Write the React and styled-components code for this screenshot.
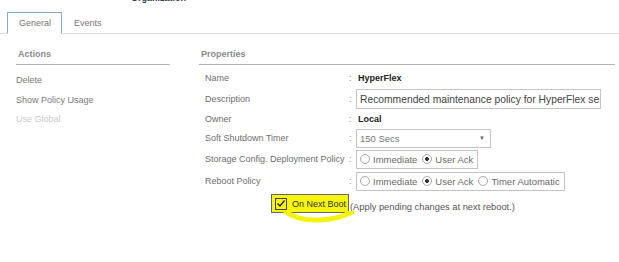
import React from "react";
import styled, { createGlobalStyle } from "styled-components";

const GlobalStyle = createGlobalStyle`
  body {
    margin: 0;
    background: #ffffff;
    font-family: "Liberation Sans", Arial, sans-serif;
  }
`;

const rows = [
  { label: "Name", kind: "bold", value: "HyperFlex", h: 20 },
  {
    label: "Description",
    kind: "input",
    value: "Recommended maintenance policy for HyperFlex servers",
    h: 21,
  },
  { label: "Owner", kind: "bold", value: "Local", h: 19 },
  { label: "Soft Shutdown Timer", kind: "select", value: "150 Secs", h: 20 },
  {
    label: "Storage Config. Deployment Policy",
    kind: "radio",
    options: ["Immediate", "User Ack"],
    selected: "User Ack",
    h: 22,
  },
  {
    label: "Reboot Policy",
    kind: "radio",
    options: ["Immediate", "User Ack", "Timer Automatic"],
    selected: "User Ack",
    h: 22,
  },
];

const App = () => {
  return (
    <Page>
      <GlobalStyle />
      <TopStrip>
        <OrgText>Organization</OrgText>
      </TopStrip>
      <TabBar>
        <Tab active>General</Tab>
        <Tab>Events</Tab>
      </TabBar>
      <Body>
        <ActionsPanel>
          <PanelHeader>Actions</PanelHeader>
          <ActionList>
            <ActionLink>Delete</ActionLink>
            <ActionLink>Show Policy Usage</ActionLink>
            <ActionLink disabled>Use Global</ActionLink>
          </ActionList>
        </ActionsPanel>
        <PropsPanel>
          <PanelHeader>Properties</PanelHeader>
          <PropRows>
            {rows.map((r) => (
              <PropRow key={r.label} h={r.h}>
                <Label>{r.label}</Label>
                <Colon>:</Colon>
                {r.kind === "bold" && <BoldValue>{r.value}</BoldValue>}
                {r.kind === "input" && <TextInput>{r.value}</TextInput>}
                {r.kind === "select" && (
                  <Select>
                    <span>{r.value}</span>
                    <Arrow>▼</Arrow>
                  </Select>
                )}
                {r.kind === "radio" && (
                  <RadioGroup>
                    {r.options.map((o) => (
                      <RadioItem key={o}>
                        <RadioDot checked={o === r.selected} />
                        {o}
                      </RadioItem>
                    ))}
                  </RadioGroup>
                )}
              </PropRow>
            ))}
          </PropRows>
          <BootRow>
            <BootBox>
              <CheckBox>
                <svg width="10" height="9" viewBox="0 0 10 9">
                  <path
                    d="M1.5 4.5 L4 7 L8.5 1.5"
                    fill="none"
                    stroke="#222"
                    strokeWidth="1.4"
                  />
                </svg>
              </CheckBox>
              On Next Boot
              <Tail width="82" height="14" viewBox="0 0 82 14">
                <path
                  d="M13 1 Q 26 10 46 9 Q 66 8 79 1"
                  fill="none"
                  stroke="#f4f40a"
                  strokeWidth="5"
                  strokeLinecap="round"
                />
              </Tail>
            </BootBox>
            <BootNote>(Apply pending changes at next reboot.)</BootNote>
          </BootRow>
        </PropsPanel>
      </Body>
    </Page>
  );
};

const Page = styled.div`
  width: 619px;
  height: 262px;
  overflow: hidden;
  background: #fff;
`;

const TopStrip = styled.div`
  height: 4px;
  overflow: hidden;
  padding-left: 131px;
`;

const OrgText = styled.div`
  margin-top: -7px;
  font-size: 9px;
  line-height: 11px;
  font-weight: bold;
  color: #2c3e50;
`;

const TabBar = styled.div`
  display: flex;
  align-items: flex-end;
  margin-top: 8px;
  padding-left: 7px;
  height: 21px;
  border-bottom: 1px solid #dcdcdc;
`;

const Tab = styled.div`
  box-sizing: border-box;
  height: ${(p) => (p.active ? "22px" : "21px")};
  margin-bottom: ${(p) => (p.active ? "-1px" : "0")};
  padding: 5px 10px 0 11px;
  font-size: 9px;
  color: #777;
  background: #fff;
  border: ${(p) => (p.active ? "1px solid #86aebd" : "1px solid transparent")};
  border-bottom: ${(p) => (p.active ? "1px solid #fff" : "none")};
`;

const Body = styled.div`
  display: flex;
  gap: 29px;
  padding: 15px 4px 0 16px;
`;

const ActionsPanel = styled.div`
  width: 154px;
`;

const PropsPanel = styled.div`
  flex: 1;
`;

const PanelHeader = styled.div`
  box-sizing: border-box;
  height: 16px;
  padding: 0 0 0 2px;
  font-size: 9px;
  line-height: 11px;
  font-weight: bold;
  color: #8a8a8a;
  border-bottom: 1px solid #b4b4b4;
`;

const ActionList = styled.div`
  display: flex;
  flex-direction: column;
  padding-top: 10px;
`;

const ActionLink = styled.div`
  height: 19.5px;
  font-size: 9px;
  line-height: 11px;
  color: ${(p) => (p.disabled ? "#c9c9c9" : "#7a7a7a")};
`;

const PropRows = styled.div`
  display: flex;
  flex-direction: column;
  padding-top: 3px;
`;

const PropRow = styled.div`
  display: flex;
  align-items: center;
  height: ${(p) => p.h}px;
  font-size: 9px;
  padding-left: 6px;
`;

const Label = styled.div`
  width: 144px;
  color: #6e6e6e;
  white-space: nowrap;
`;

const Colon = styled.div`
  width: 7px;
  color: #8a8a8a;
`;

const BoldValue = styled.div`
  font-weight: bold;
  color: #222;
  padding-left: 2px;
`;

const TextInput = styled.div`
  box-sizing: border-box;
  width: 245px;
  height: 20px;
  padding: 4px 3px 0 3px;
  border: 1px solid #c4c4c4;
  color: #444;
  font-size: 10.3px;
  white-space: nowrap;
  overflow: hidden;
`;

const Select = styled.div`
  box-sizing: border-box;
  display: flex;
  justify-content: space-between;
  align-items: center;
  width: 135px;
  height: 19px;
  padding: 0 5px 0 3px;
  border: 1px solid #c4c4c4;
  font-size: 9.5px;
  color: #777;
`;

const Arrow = styled.span`
  font-size: 6px;
  color: #666;
`;

const RadioGroup = styled.div`
  box-sizing: border-box;
  display: flex;
  align-items: center;
  gap: 5px;
  height: 19px;
  padding: 0 4px 0 3px;
  border: 1px solid #c4c4c4;
  font-size: 9.5px;
  color: #6a6a6a;
`;

const RadioItem = styled.label`
  display: flex;
  align-items: center;
  gap: 3px;
`;

const RadioDot = styled.span`
  box-sizing: border-box;
  width: 10px;
  height: 10px;
  border-radius: 50%;
  border: 1px solid #a8a8a8;
  background: ${(p) =>
    p.checked
      ? "radial-gradient(circle, #333 0 1.7px, #fff 2.2px)"
      : "#fff"};
`;

const BootRow = styled.div`
  display: flex;
  align-items: center;
  margin-top: 2px;
  padding-left: 72px;
  font-size: 9px;
`;

const BootBox = styled.div`
  position: relative;
  box-sizing: border-box;
  display: flex;
  align-items: center;
  gap: 5px;
  width: 78px;
  height: 19px;
  padding-left: 3px;
  border: 1px solid #666;
  background: #f6f60c;
  color: #333;
  white-space: nowrap;
`;

const CheckBox = styled.span`
  box-sizing: border-box;
  display: flex;
  align-items: center;
  justify-content: center;
  width: 12px;
  height: 12px;
  border: 1px solid #444;
`;

const Tail = styled.svg`
  position: absolute;
  left: 1px;
  top: 16px;
`;

const BootNote = styled.div`
  color: #555;
  padding-left: 1px;
  margin-top: 6px;
  font-size: 9.3px;
`;

export default App;
